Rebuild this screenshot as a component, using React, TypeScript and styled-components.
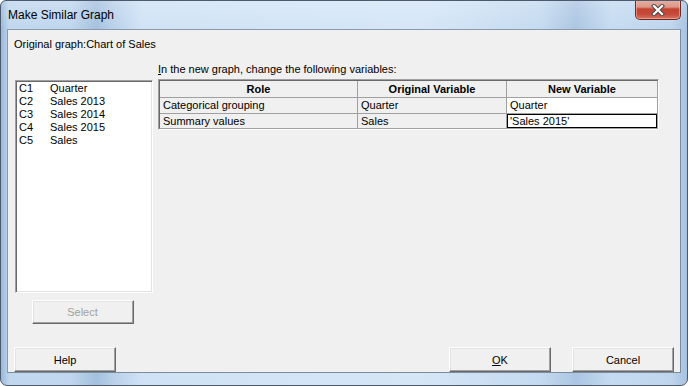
import React from 'react';
import styled, { createGlobalStyle } from 'styled-components';

const Global = createGlobalStyle`
  html, body { margin: 0; padding: 0; background: #ffffff; }
  body { font-family: "Liberation Sans", Arial, sans-serif; font-size: 11px; color: #000; }
  * { box-sizing: border-box; }
`;

const Window = styled.div`
  width: 688px;
  height: 386px;
  border: 1px solid #4b5b6d;
  border-radius: 6px 6px 7px 7px;
  background:
    linear-gradient(180deg, rgba(255,255,255,0.2) 0px, rgba(255,255,255,0) 30px),
    linear-gradient(90deg, #9ab8d8 0px, #c0d7ee 8px, #bfd6ee 70px, #a4c0de 95px, #b8d0ea 112px, #cfe2f5 140px, #d5e6f7 420px, #c4daf0 540px, #abc5e2 575px, #c5dbf1 610px, #bed5ed 670px, #a4c0de 688px);
  display: flex;
  flex-direction: column;
  padding: 0 6px 12px 6px;
  overflow: hidden;
`;

const TitleBar = styled.div`
  height: 28px;
  display: flex;
  justify-content: space-between;
  align-items: flex-start;
  padding-left: 1px;
`;

const Title = styled.div`
  font-size: 12px;
  line-height: 12px;
  margin-top: 8px;
  color: #000;
`;

const CloseButton = styled.div`
  width: 46px;
  height: 20px;
  margin-top: -1px;
  border: 1px solid #6e2a20;
  border-top: none;
  border-radius: 0 0 5px 5px;
  background: linear-gradient(180deg, #e7b0a2 0px, #dc978a 7px, #c3432f 9px, #c5493a 14px, #d77462 19px);
  box-shadow: inset 0 0 0 1px rgba(255, 200, 190, 0.5);
  display: flex;
  align-items: center;
  justify-content: center;
`;

const Client = styled.div`
  flex: 1;
  background: #f0f0f0;
  border: 1px solid #7d8c9c;
  border-top-color: #8a9aab;
  border-left-color: #8a9aab;
  display: flex;
  flex-direction: column;
  padding: 8px 6px 0 6px;
`;

const Caption = styled.div`
  line-height: 13px;
  height: 13px;
  white-space: pre;
`;

const MainRow = styled.div`
  display: flex;
  align-items: flex-start;
  margin-top: 12px;
`;

const LeftColumn = styled.div`
  display: flex;
  flex-direction: column;
  align-items: center;
  margin-top: 17px;
  margin-left: 1px;
  width: 138px;
`;

const ListBox = styled.div`
  width: 138px;
  height: 213px;
  background: #fff;
  border: 1px solid;
  border-color: #a0a0a0 #ffffff #ffffff #a0a0a0;
  box-shadow: inset 1px 1px 0 #696969, inset -1px -1px 0 #e3e3e3;
  padding: 1px 2px;
`;

const ListRow = styled.div`
  display: flex;
  height: 13px;
  line-height: 13px;
  padding-left: 1px;
`;

const ColId = styled.span`
  width: 31px;
`;

const Button = styled.div<{ $disabled?: boolean; $width?: number }>`
  width: ${p => p.$width ?? 102}px;
  height: 25px;
  background: #f0f0f0;
  border: 1px solid;
  border-color: #ffffff #696969 #696969 #ffffff;
  box-shadow: inset -1px -1px 0 #a0a0a0, inset 1px 1px 0 #e3e3e3;
  display: flex;
  align-items: center;
  justify-content: center;
  padding-top: 1px;
  color: ${p => (p.$disabled ? '#a0a0a0' : '#000')};
  line-height: 13px;
`;

const SelectButton = styled(Button)`
  margin-top: 7px;
  margin-left: -3px;
  height: 24px;
`;

const RightColumn = styled.div`
  display: flex;
  flex-direction: column;
  margin-left: 5px;
`;

const Prompt = styled.div`
  line-height: 13px;
  height: 13px;
  margin-bottom: 3px;
`;

const TableFrame = styled.div`
  width: 501px;
  border: 1px solid;
  border-color: #a0a0a0 #ffffff #ffffff #a0a0a0;
`;

const Grid = styled.div`
  display: grid;
  grid-template-columns: 197px 148px 150px;
  grid-template-rows: 16px 15px 14px;
  gap: 1px;
  background: #a0a0a0;
  border: 1px solid;
  border-color: #696969 #a0a0a0 #a0a0a0 #696969;
`;

const HeaderCell = styled.div`
  background: #f0f0f0;
  font-weight: bold;
  text-align: center;
  line-height: 16px;
`;

const Cell = styled.div<{ $white?: boolean; $focused?: boolean }>`
  background: ${p => (p.$white ? '#ffffff' : '#f0f0f0')};
  line-height: ${p => (p.$focused ? '12px' : '15px')};
  padding-left: ${p => (p.$focused ? '2px' : '3px')};
  border: ${p => (p.$focused ? '1px solid #000' : 'none')};
  white-space: nowrap;
`;

const Footer = styled.div`
  margin-top: auto;
  display: flex;
  justify-content: space-between;
  align-items: flex-end;
`;

const ButtonGroup = styled.div`
  display: flex;
  gap: 21px;
`;

const Key = styled.u`
  text-decoration: underline;
  text-underline-offset: 1px;
`;

const CloseIcon = () => (
  <svg width="14" height="12" viewBox="0 0 14 12">
    <path d="M3 2 L11 10 M11 2 L3 10" stroke="#4a4a4a" strokeWidth="4.2" strokeLinecap="square" />
    <path d="M3 2 L11 10 M11 2 L3 10" stroke="#ffffff" strokeWidth="2.2" strokeLinecap="square" />
  </svg>
);

const columns: [string, string][] = [
  ['C1', 'Quarter'],
  ['C2', 'Sales 2013'],
  ['C3', 'Sales 2014'],
  ['C4', 'Sales 2015'],
  ['C5', 'Sales'],
];

export default function App() {
  return (
    <>
      <Global />
      <Window>
        <TitleBar>
          <Title>Make Similar Graph</Title>
          <CloseButton>
            <CloseIcon />
          </CloseButton>
        </TitleBar>
        <Client>
          <Caption>Original graph:Chart of Sales</Caption>
          <MainRow>
            <LeftColumn>
              <ListBox>
                {columns.map(([id, name]) => (
                  <ListRow key={id}>
                    <ColId>{id}</ColId>
                    <span>{name}</span>
                  </ListRow>
                ))}
              </ListBox>
              <SelectButton $disabled>Select</SelectButton>
            </LeftColumn>
            <RightColumn>
              <Prompt>
                <Key>I</Key>n the new graph, change the following variables:
              </Prompt>
              <TableFrame>
                <Grid>
                  <HeaderCell>Role</HeaderCell>
                  <HeaderCell>Original Variable</HeaderCell>
                  <HeaderCell>New Variable</HeaderCell>
                  <Cell>Categorical grouping</Cell>
                  <Cell>Quarter</Cell>
                  <Cell $white>Quarter</Cell>
                  <Cell>Summary values</Cell>
                  <Cell>Sales</Cell>
                  <Cell $white $focused>'Sales 2015'</Cell>
                </Grid>
              </TableFrame>
            </RightColumn>
          </MainRow>
          <Footer>
            <Button>Help</Button>
            <ButtonGroup>
              <Button>
                <span><Key>O</Key>K</span>
              </Button>
              <Button>Cancel</Button>
            </ButtonGroup>
          </Footer>
        </Client>
      </Window>
    </>
  );
}
